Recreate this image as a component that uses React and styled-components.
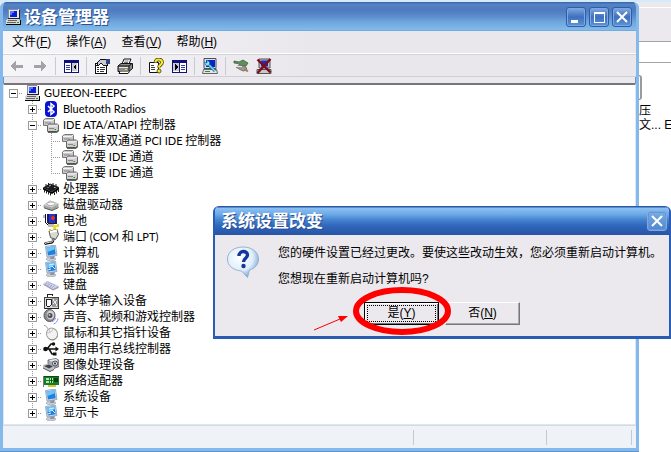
import React, { useState } from 'react'
import styled, { createGlobalStyle, css } from 'styled-components'

const GlobalStyle = createGlobalStyle`
  * { box-sizing: border-box; }
  body {
    margin: 0;
    background: #fff;
    font-family: "Liberation Sans", "Noto Sans CJK SC", sans-serif;
    font-size: 12px;
    line-height: 16px;
    color: #000;
  }
  button {
    font: inherit;
    color: inherit;
    padding: 0;
    border: none;
    background: none;
  }
  svg { display: block; }
`

const Desktop = styled.main`
  position: relative;
  min-height: 100vh;
  overflow: hidden;
`

/* explorer window behind everything */
const Explorer = styled.section`
  position: absolute;
  inset: 0;
  display: flex;
  flex-direction: column;
  background: #fff;
`
const ExplorerStrip = styled.div`
  height: 8px;
  background: linear-gradient(#d5ebfa 2px, #ebe9ed 2px);
  border-bottom: 1px solid #fff;
`
const ExplorerBar = styled.div`
  height: 34px;
  background: #ebe9ed;
  border-bottom: 1px solid #a5a4a8;
`
const ExplorerAddress = styled.div`
  height: 21px;
  border-bottom: 1px solid #a5a4a8;
`
const ExplorerFile = styled.div`
  display: flex;
  flex-direction: column;
  align-items: flex-end;
  padding-top: 12px;
`
const FileThumb = styled.div`
  width: 50px;
  height: 25px;
  margin: 0 29px 4px 0;
  border: 1px solid #8f8f94;
  border-right: 2px solid #9a9a9f;
  border-radius: 3px;
`
const FileName = styled.div`
  width: 44px;
  line-height: 14px;
  white-space: nowrap;
`

const Window = styled.section`
  position: relative;
  display: flex;
  flex-direction: column;
  min-height: calc(100vh - 3px);
  margin: 2px 32px 1px 0;
  border: solid #85b9ec;
  border-width: 0 3px 3px;
  border-radius: 6px 6px 0 0;
  background: #ebe9ed;
  box-shadow: inset 0 0 0 1px #5c9bd8, 0 1px 0 #5c93d0;
  overflow: hidden;
`
const TitleBar = styled.header`
  display: flex;
  align-items: center;
  gap: 3px;
  height: 29px;
  ${p => p.$active ? css`
    padding: 0 2px 0 6px;
    background: linear-gradient(#2a57a8 1px, #8cc0f2 2px, #6fabe8 8px, #4482cf 14px, #2f66bb 20px, #2856a8 28px);
  ` : css`
    margin: 0 -3px;
    padding: 0 7px 0 5px;
    background: linear-gradient(#3d6cae 1px, #5583c5 2px, #4e7bc0 8px, #5a8bcb 14px, #6ba2da 19px, #83bbe9 28px, #5b9bd8 29px);
  `}
`
const Title = styled.h1`
  flex: 1;
  margin: 0;
  padding-top: 3px;
  font-size: 17px;
  line-height: 24px;
  color: #fff;
  text-shadow: 1px 1px 0 #2b4f93;
`
const TitleButton = styled.button`
  display: flex;
  align-items: center;
  justify-content: center;
  width: 20px;
  height: 20px;
  border: 1px solid ${p => p.$pale ? '#7fa9dc' : '#2f5ea8'};
  border-radius: 3px;
  background: ${p => p.$pale
    ? 'linear-gradient(#7aade3, #4f86cf)'
    : 'linear-gradient(#82a8dd, #3f70bf 50%, #5d93d6)'};
  box-shadow: inset 0 0 0 1px ${p => p.$pale ? '#6297d8' : '#7ba8e0'};
`

const MenuBar = styled.nav`
  display: flex;
  gap: 15px;
  height: 23px;
  padding: 0 9px;
  align-items: center;
  background: linear-gradient(90deg, #f6f5f7, #e9e7ec 50%);
  border-bottom: 1px solid #fff;
`
const MenuItem = styled.button`
  white-space: nowrap;
`
const ToolBar = styled.div`
  display: flex;
  align-items: center;
  height: 23px;
  padding: 0 2px;
  background: linear-gradient(90deg, #f6f5f7, #e9e7ec 50%);
  border-top: 1px solid #d3d2d6;
  border-bottom: 1px solid #d0d0d4;
`
const ToolButton = styled.button`
  display: flex;
  align-items: center;
  justify-content: center;
  width: 23px;
  height: 22px;
`
const Divider = styled.span`
  width: 8px;
  height: 18px;
  background: linear-gradient(90deg, transparent 4px, #c6cdd0 4px, #c6cdd0 5px, transparent 5px);
`

const TreePane = styled.div`
  flex: 1;
  margin-top: 6px;
  padding-bottom: 3px;
  background: #fff;
  border: 1px solid #dce8f2;
  border-top: 2px solid #77777b;
`
const Tree = styled.ul`
  margin: 0;
  padding: 0;
  list-style: none;
`
const TreeRow = styled.li`
  display: flex;
  align-items: center;
  height: 16px;
`
/* one 19px column of the tree: dotted rail down, dotted arm to the right */
const Branch = styled.span`
  flex: none;
  display: flex;
  align-items: center;
  width: 19px;
  height: 16px;
  padding-left: 5px;
  background-image:
    ${p => p.$rail ? 'repeating-linear-gradient(#9a9a9a 0 1px, transparent 1px 2px)' : 'none'},
    ${p => p.$arm ? 'repeating-linear-gradient(90deg, #9a9a9a 0 1px, transparent 1px 2px)' : 'none'};
  background-repeat: no-repeat;
  background-size: 1px ${p => p.$last ? '8px' : '16px'}, 10px 1px;
  background-position: 9px 0, 9px 8px;
`
const Toggle = styled.button`
  width: 9px;
  height: 9px;
  border: 1px solid #9a9a9a;
  background:
    linear-gradient(#000, #000) center / 5px 1px no-repeat,
    ${p => p.$open ? '' : 'linear-gradient(#000, #000) center / 1px 5px no-repeat,'}
    #fff;
`
const TreeIcon = styled.span`
  flex: none;
  margin: 0 4px 0 1px;
`
const Label = styled.span`
  white-space: nowrap;
`
const Latin = styled.span`
  font-family: Lato, "Liberation Sans", sans-serif;
  font-size: 11px;
`

const StatusBar = styled.footer`
  display: flex;
  height: 23px;
  padding: 4px 4px 3px 0;
  background: #eff3f8;
  border-top: 1px solid #d5dbe3;
`
const StatusPane = styled.span`
  ${p => p.$width ? `width: ${p.$width}px;` : 'flex: 1;'}
  border-right: 1px solid #c3c9d0;
`

const Dialog = styled.section`
  position: absolute;
  top: 206px;
  left: 213px;
  right: 0;
  border: solid #2a5bb5;
  border-width: 0 2px 3px 2px;
  border-radius: 6px 6px 0 0;
  background: #ebe9ed;
  overflow: hidden;
`
const DialogBody = styled.div`
  display: grid;
  grid-template-columns: 32px 1fr;
  column-gap: 19px;
  padding: 10px 0 0 12px;
`
const BubbleSlot = styled.div`
  padding-top: 1px;
`
const Message = styled.p`
  margin: 0 0 10px;
  white-space: nowrap;
`
const DialogActions = styled.div`
  display: flex;
  justify-content: center;
  gap: 6px;
  padding: 5px 0 11px;
`
const PushButton = styled.button`
  width: 75px;
  height: 23px;
  padding: 2px;
  border: 1px solid;
  border-color: #fff #77777b #77777b #fff;
  box-shadow: inset -1px -1px 0 #aaa8ad;
  background: #ebe9ed;
  ${p => p.$primary && css`
    border-color: #000;
    box-shadow: inset 1px 1px 0 #fff, inset -1px -1px 0 #77777b;
  `}
`
const FocusRing = styled.span`
  display: block;
  height: 17px;
  border: 1px ${p => p.$on ? 'dotted #000' : 'solid transparent'};
  line-height: 15px;
`
const Marker = styled.svg`
  position: absolute;
  left: 312px;
  top: 285px;
  pointer-events: none;
`

/* icons */
const Svg = ({ children, smooth, size = 16 }) => (
  <svg width={size} height={size} viewBox={`0 0 ${size} ${size}`} fill="none"
    shapeRendering={smooth ? 'auto' : 'crispEdges'} aria-hidden="true">{children}</svg>
)

const ComputerIcon = () => (
  <Svg>
    <path d="M3 0h10l1 1v8H3z" fill="#e6e6ea" />
    <path d="M3 0h10v1H3zM3 1h1v8H3z" fill="#8c8c98" />
    <path d="M5 2h7v6H5z" fill="#0a1cd8" />
    <path d="M5 2h4v2H7v2H5z" fill="#4e7bff" />
    <path d="M14 1h1v9h-1zM3 9h11v1H3z" fill="#222" />
    <path d="M2 10h11l2 2v3H1v-3z" fill="#d7d7d7" />
    <path d="M1 15h15v1H1zM15 11h1v4h-1z" fill="#000" />
    <path d="M3 11h9v1H3zM2 13h9v1H2z" fill="#666" />
    <path d="M12 13h2v1h-2z" fill="#18a018" />
  </Svg>
)
const BluetoothIcon = () => (
  <Svg smooth>
    <rect x="2" y="0" width="12" height="16" rx="4" fill="#0714cf" />
    <path d="M5 5l6 6-3 2.500v-11L11 5l-6 6" stroke="#fff" strokeWidth="1.500" />
  </Svg>
)
const DriveIcon = () => (
  <Svg smooth>
    <path d="M.5 3l2-1.500h8.500l.5 1v4.500l-2 1.500h-9z" fill="#c9c9c9" stroke="#777" />
    <path d="M1 3.500h8.500L11 2" stroke="#f4f4f4" />
    <path d="M2 6h6" stroke="#8b8b8b" />
    <path d="M4.500 8.500l2-1.500h8l1 1v5l-2 1.500h-9z" fill="#cdcdcd" stroke="#666" />
    <path d="M5 9h8.500l1.500-1.500" stroke="#fafafa" />
    <path d="M6 11.500h5" stroke="#888" />
    <path d="M11.500 12.500h1.500" stroke="#1ba31b" />
    <path d="M5 15.200h9l2-1.700" stroke="#222" />
  </Svg>
)
const ChipIcon = () => (
  <Svg smooth>
    <path d="M0 6.500L7 2.500l9 3.500-7 5z" fill="#1b1b1b" />
    <path d="M0 6.500l9 4.500v2L0 8.500zM9 11l7-5v2.500L9 13z" fill="#000" />
    <path d="M1.500 9v2.500M3.500 10v2.500M5.500 11v2.500M7.500 12v2.500M11.500 11.500V14M13.500 10v2.500M15.500 8.500V11M3 3v2M5.500 2v2M10 2v2M13 3v2" stroke="#222" />
    <path d="M6 5l2-1M11 6.500h1.500M4.500 6.500h1" stroke="#bbb" />
  </Svg>
)
const DiskIcon = () => (
  <Svg smooth>
    <path d="M0.500 8L7 3.500l8.500 3v3.500L9 13.500l-8.500-3z" fill="#a7a7a7" />
    <path d="M0.500 8L7 3.500l8.500 3L9 10.500z" fill="#d2d2d2" />
    <ellipse cx="8" cy="6.800" rx="4" ry="1.800" fill="#f8f8f8" stroke="#999" strokeWidth=".7" />
    <path d="M1 10.800l8 2.700 6.500-3" stroke="#555" />
    <path d="M11 11.500l2-1" stroke="#53b94e" />
  </Svg>
)
const BatteryIcon = () => (
  <Svg>
    <path d="M4 1h10v9H4z" fill="#2633c4" />
    <path d="M4 1h2v9H4zM12 1h2v9h-2z" fill="#151c70" />
    <path d="M9 3h2v4H9zM8 4h4v2H8z" fill="#e32b2b" />
    <path d="M2 1v8l3 3h5l1 2" stroke="#111" />
    <path d="M0 2h2v3H0zM5 11h6v3H5z" fill="#bcbcbc" />
    <path d="M10 12h5v2h-2v2h-3zM14 11h2v3h-2z" fill="#e8dd26" />
    <path d="M5 10h9v1H5z" fill="#222" />
  </Svg>
)
const PortIcon = () => (
  <Svg smooth>
    <path d="M6 2l8-1.500 1.500 5-3 5-5-2z" fill="#d9d9cf" stroke="#555" />
    <path d="M7 3l7-1.500" stroke="#fff" strokeWidth="2" />
    <path d="M7 0v2M14 0v1" stroke="#dfc832" strokeWidth="2" />
    <path d="M10 9.500c1 6-4 3-8.500 5.500" stroke="#111" strokeWidth="2.500" />
    <path d="M10 9.500c1 5-4 3-8 5" stroke="#f1f1f1" />
  </Svg>
)
const MonitorIcon = ({ card }) => (
  <Svg smooth>
    <ellipse cx="8" cy="14" rx="5" ry="1.800" fill="#c9ccd2" stroke="#9fa3ac" strokeWidth=".6" />
    <path d="M8 10h4l-1 4H7z" fill="#8e96a5" />
    <path d="M2.500 1.500L12.500 0l1.500 10.500L4 12z" fill="#d2dbe6" stroke="#8b9ab0" strokeWidth=".8" />
    <path d="M3.500 2.500l8-1.200 1.200 8L5 10.500z" fill="#1f80e0" />
    <path d="M3.500 2.500l8-1.200.5 3-8 3z" fill="#6bc4fa" />
    {card && <path d="M6 4l5-1M6 7l3-2 3 3M5 9l3-1" stroke="#d9f1ff" />}
  </Svg>
)
const KeyboardIcon = () => (
  <Svg smooth>
    <path d="M0.500 6.500L4 4l11.500 5v2L10 13.500 0.500 8z" fill="#9a9dbb" />
    <path d="M0.500 6.500L4 4l11.500 5-5.500 3z" fill="#e1e3f3" />
    <path d="M3 5.800l9 4.500M2 6.800l8 4.200M4.500 5l9 4.200" stroke="#8286b5" strokeWidth=".9" strokeDasharray="1.200 .7" />
  </Svg>
)
const HidIcon = () => (
  <Svg>
    <path d="M1 4h14v11H1z" fill="#dedede" stroke="#444" />
    <path d="M9 5h6v9H9z" fill="#999" />
    <path d="M10 6l4 7M10 11l4-4" stroke="#eee" />
    <path d="M4 4V1h5v2" stroke="#222" />
    <path d="M3 6h5v6l-1 1H4l-1-1z" fill="#fff" stroke="#222" />
    <path d="M2 15h14v1H2z" fill="#222" />
  </Svg>
)
const SoundIcon = () => (
  <Svg smooth>
    <ellipse cx="6.500" cy="6.500" rx="5.500" ry="6" fill="#8c8c91" stroke="#55555a" />
    <ellipse cx="7.500" cy="6" rx="3.800" ry="4.500" fill="#d0d0d5" />
    <circle cx="7" cy="6.500" r="2.500" fill="#4c4c55" />
    <circle cx="6.500" cy="6" r="1" fill="#c4c4ce" />
    <path d="M9 12.500c2-.5 3-1.500 3.500-3.500M10.500 15c3-1 4-3 4.500-5.500" stroke="#8a8ee0" />
  </Svg>
)
const MouseIcon = () => (
  <Svg smooth>
    <path d="M1 0.500c3 0 2 2 4 3" stroke="#999" />
    <ellipse cx="9" cy="9" rx="5.500" ry="6" transform="rotate(-25 9 9)" fill="#f3f3f1" stroke="#a3a39d" />
    <path d="M4 8c3 0 5-1 6-4M7 7l-1-3" stroke="#b5b5b0" strokeWidth=".8" />
    <path d="M7 14.500c4 1 7-1 7.500-4" stroke="#8f8f88" />
  </Svg>
)
const UsbIcon = () => (
  <Svg smooth>
    <path d="M2 8h12M4 8l4-5h3M6 8l3 5h3" stroke="#111" strokeWidth="1.500" />
    <circle cx="2.500" cy="8" r="2.300" fill="#111" />
    <path d="M12.500 5.500L16 8l-3.500 2.500z" fill="#111" />
    <circle cx="10.500" cy="3" r="1.700" fill="#111" />
    <path d="M10 11.500h3.500v3H10z" fill="#111" />
  </Svg>
)
const CameraIcon = () => (
  <Svg smooth>
    <path d="M5 3l8-1.500 3 2v6l-5 2-6-2z" fill="#a6a8ae" stroke="#5c5e66" strokeWidth=".8" />
    <path d="M6 3l7-1 2 1.500-7 1z" fill="#ececef" />
    <circle cx="12" cy="6.500" r="2.500" fill="#d9e2ee" stroke="#333" strokeWidth=".8" />
    <circle cx="12" cy="6.500" r="1" fill="#222" />
    <path d="M0 8l5-1.500 6 3v3L7 14.500 0 11z" fill="#bfc1c7" />
    <path d="M1 9l5-1.500 4 2-4 2z" fill="#3f4248" />
    <path d="M0 11l7 3.500 4-2" stroke="#555" />
  </Svg>
)
const NetworkIcon = () => (
  <Svg>
    <path d="M0 3h1v11H0z" fill="#777" />
    <path d="M1 3h15v9H1z" fill="#137c25" />
    <path d="M3 5h3v2H3zM7 5h3v2H7zM3 8h3v2H3zM7 8h3v2H7z" fill="#b9e5b2" />
    <path d="M11 5h4v4h-4z" fill="#0a3f13" />
    <path d="M5 12h8v2H5z" fill="#d4c23b" />
    <path d="M1 3h15v1H1zM8 5h1v5H8z" fill="#0a4c14" />
  </Svg>
)

const ArrowIcon = ({ right }) => (
  <Svg>
    <path d={right ? 'M2 7h7V3l6 5-6 5V10H2z' : 'M14 7H7V3L1 8l6 5V10h7z'} fill="#a3a3a6" />
  </Svg>
)
const PaneIcon = ({ right }) => (
  <Svg>
    <path d="M1 2h14v12H1z" fill="#fff" stroke="#10107a" />
    <path d="M1 2h14v3H1z" fill="#10107a" />
    <path d={right ? 'M2 5h6v8H2z' : 'M8 5h6v8H8z'} fill="#c9c9cf" />
    <path d="M8 5h1v9H8z" fill="#10107a" />
    <path d={right ? 'M4 6l3 3-3 3z' : 'M13 6l-3 3 3 3z'} fill="#000" />
    <path d={right ? 'M10 7h4M10 9h4M10 11h4' : 'M3 7h4M3 9h4M3 11h4'} stroke="#333a9a" />
  </Svg>
)
const PropertiesIcon = () => (
  <Svg>
    <path d="M1 5h11v10H1z" fill="#fff" stroke="#111" />
    <path d="M3 9h2M6 9h5M3 11h2M6 11h5M3 13h2M6 13h4" stroke="#333" />
    <path d="M4 4l3-3h6v6H9L7 5 5 7H3z" fill="#c7cbd3" stroke="#111" />
    <path d="M12 1h4v5h-4z" fill="#32457e" />
  </Svg>
)
const PrinterIcon = () => (
  <Svg smooth>
    <path d="M5 6l2-5h7l-2 5z" fill="#fff" stroke="#111" />
    <path d="M7.500 3h4M7 4.500h4" stroke="#555" strokeWidth=".8" />
    <path d="M1 8l3-2.500h11.500v5L12 13.500H1z" fill="#8b8b8b" stroke="#111" />
    <path d="M1 8h11l3-2.500M12 8v5" stroke="#111" />
    <path d="M2 9.500h9" stroke="#e8e8e8" />
    <path d="M8 11.500h2" stroke="#efe32e" />
    <path d="M3 13.500l-1 2h9l1.500-2" fill="#fff" stroke="#111" />
  </Svg>
)
const HelpIcon = () => (
  <Svg smooth>
    <path d="M1.500 4.500h9v10h-9z" fill="#fff" stroke="#111" />
    <path d="M3 7.500h3M3 9.500h4M3 11.500h4" stroke="#444" />
    <path d="M7.500 4.500c0-4 6.500-4 6.500 0 0 2.500-3 2-3 5" stroke="#3a3700" strokeWidth="3.600" />
    <path d="M7.500 4.500c0-4 6.500-4 6.500 0 0 2.500-3 2-3 5" stroke="#f5e72c" strokeWidth="2.200" />
    <circle cx="11" cy="13" r="2" fill="#f5e72c" stroke="#3a3700" strokeWidth=".8" />
  </Svg>
)
const ScanIcon = () => (
  <Svg smooth>
    <path d="M2 .5h12v10H2z" fill="#d9e0ea" stroke="#4c5160" />
    <path d="M4 2h9v7H4z" fill="#0a23c4" />
    <path d="M1.500 11.500h13l1 4H.5z" fill="#e5e5e5" stroke="#666" />
    <path d="M3 13.500h5" stroke="#1a9a2a" />
    <path d="M6 6l7 7" stroke="#1b5f9e" strokeWidth="3" />
    <path d="M6 6l7 7" stroke="#6fe0f5" strokeWidth="1.500" />
    <path d="M2 4l3 1 0-3 2.500 2v3L4.500 8z" fill="#8deaf7" stroke="#2476a8" strokeWidth=".8" />
  </Svg>
)
const PlugIcon = () => (
  <Svg smooth>
    <path d="M1 3l5 1 4-2 5 3-2 3-6-.5L5 5.500 1 5z" fill="#5f8f5d" stroke="#3f5f40" strokeWidth=".8" />
    <path d="M3 9l4-2 6 2 1 3-4 1-4-2z" fill="#9b9b94" stroke="#65655f" strokeWidth=".8" />
    <path d="M3 8.500h6" stroke="#e8e8e2" />
    <path d="M11 11l4 2.500" stroke="#a5825a" strokeWidth="2" />
  </Svg>
)
const UninstallIcon = () => (
  <Svg smooth>
    <path d="M3 1h11v9H3z" fill="#bcbccb" stroke="#555" />
    <path d="M5 2.500h7v6H5z" fill="#1d2fc0" />
    <path d="M1 11.500h14v4H1z" fill="#c9c9c9" stroke="#555" />
    <path d="M1.500 1.500l13 13M14.500 1l-13 14" stroke="#7d0b1d" strokeWidth="2.400" />
  </Svg>
)
const BubbleIcon = () => (
  <Svg smooth size={32}>
    <defs>
      <radialGradient id="bubble" cx=".4" cy=".35" r=".7">
        <stop offset="0" stopColor="#fff" />
        <stop offset=".6" stopColor="#e0eefa" />
        <stop offset="1" stopColor="#6d9bcc" />
      </radialGradient>
    </defs>
    <path d="M16 1c9 0 15.500 5 15.500 12 0 5.500-3.500 9.500-9 11l-2 7.500-6-6.500C6 24 .5 20 .5 13 .5 6 7 1 16 1z"
      fill="url(#bubble)" stroke="#98b2cd" />
    <path d="M12 10c0-6 8.500-5.500 8.500-1 0 3.500-4 3-4 7" stroke="#12379a" strokeWidth="3.400" />
    <circle cx="16.500" cy="20" r="2.200" fill="#12379a" />
  </Svg>
)
const CloseGlyph = () => (
  <Svg smooth><path d="M3 3l10 10M13 3L3 13" stroke="#fff" strokeWidth="2" /></Svg>
)

const menus = [['文件', 'F'], ['操作', 'A'], ['查看', 'V'], ['帮助', 'H']]

const tools = [
  ['后退', <ArrowIcon />], ['前进', <ArrowIcon right />], null,
  ['控制台树', <PaneIcon />], null,
  ['属性', <PropertiesIcon />], ['打印', <PrinterIcon />], null,
  ['帮助', <HelpIcon />], ['操作窗格', <PaneIcon right />], null,
  ['扫描', <ScanIcon />], null,
  ['停用', <PlugIcon />], ['卸载', <UninstallIcon />],
]

const devices = [
  { label: 'Bluetooth Radios', icon: <BluetoothIcon /> },
  {
    label: 'IDE ATA/ATAPI 控制器',
    icon: <DriveIcon />,
    children: ['标准双通道 PCI IDE 控制器', '次要 IDE 通道', '主要 IDE 通道'],
  },
  { label: '处理器', icon: <ChipIcon /> },
  { label: '磁盘驱动器', icon: <DiskIcon /> },
  { label: '电池', icon: <BatteryIcon /> },
  { label: '端口 (COM 和 LPT)', icon: <PortIcon /> },
  { label: '计算机', icon: <MonitorIcon /> },
  { label: '监视器', icon: <MonitorIcon card /> },
  { label: '键盘', icon: <KeyboardIcon /> },
  { label: '人体学输入设备', icon: <HidIcon /> },
  { label: '声音、视频和游戏控制器', icon: <SoundIcon /> },
  { label: '鼠标和其它指针设备', icon: <MouseIcon /> },
  { label: '通用串行总线控制器', icon: <UsbIcon /> },
  { label: '图像处理设备', icon: <CameraIcon /> },
  { label: '网络适配器', icon: <NetworkIcon /> },
  { label: '系统设备', icon: <MonitorIcon /> },
  { label: '显示卡', icon: <MonitorIcon card /> },
]

// latin runs are set one size smaller than the chinese
const Mixed = ({ text }) => text.split(/([ -~]+)/).map((part, i) =>
  i % 2 ? <Latin key={i}>{part}</Latin> : part
)

const Accel = ({ text, letter }) => <>{text}(<u>{letter}</u>)</>

const DeviceTree = () => {
  const [rootOpen, setRootOpen] = useState(true)
  const [open, setOpen] = useState({ 'IDE ATA/ATAPI 控制器': true })

  return (
    <Tree>
      <TreeRow>
        <Branch $arm>
          <Toggle aria-label="GUEEON-EEEPC" $open={rootOpen} onClick={() => setRootOpen(!rootOpen)} />
        </Branch>
        <TreeIcon><ComputerIcon /></TreeIcon>
        <Label><Mixed text="GUEEON-EEEPC" /></Label>
      </TreeRow>
      {rootOpen && devices.map(({ label, icon, children = [] }, i) => (
        <React.Fragment key={label}>
          <TreeRow>
            <Branch />
            <Branch $rail $arm $last={i === devices.length - 1}>
              <Toggle
                aria-label={label}
                $open={open[label]}
                onClick={() => setOpen({ ...open, [label]: !open[label] })}
              />
            </Branch>
            <TreeIcon>{icon}</TreeIcon>
            <Label><Mixed text={label} /></Label>
          </TreeRow>
          {open[label] && children.map((child, j) => (
            <TreeRow key={child}>
              <Branch />
              <Branch $rail />
              <Branch $rail $arm $last={j === children.length - 1} />
              <TreeIcon><DriveIcon /></TreeIcon>
              <Label><Mixed text={child} /></Label>
            </TreeRow>
          ))}
        </React.Fragment>
      ))}
    </Tree>
  )
}

const App = () => (
  <>
    <GlobalStyle />
    <Desktop>
      <Explorer>
        <ExplorerStrip />
        <ExplorerBar />
        <ExplorerAddress />
        <ExplorerFile>
          <FileThumb />
          <FileName>一压</FileName>
          <FileName>件文... E</FileName>
        </ExplorerFile>
      </Explorer>

      <Window>
        <TitleBar>
          <ComputerIcon />
          <Title>设备管理器</Title>
          <TitleButton aria-label="最小化">
            <Svg><path d="M3 11h7v3H3z" fill="#fff" /></Svg>
          </TitleButton>
          <TitleButton aria-label="最大化">
            <Svg><path d="M3 3h11v11H3zM4 5v8h9V5z" fill="#fff" fillRule="evenodd" /></Svg>
          </TitleButton>
          <TitleButton aria-label="关闭"><CloseGlyph /></TitleButton>
        </TitleBar>
        <MenuBar>
          {menus.map(([text, letter]) => (
            <MenuItem key={letter}><Accel text={text} letter={letter} /></MenuItem>
          ))}
        </MenuBar>
        <ToolBar>
          {tools.map((tool, i) => tool
            ? <ToolButton key={i} aria-label={tool[0]}>{tool[1]}</ToolButton>
            : <Divider key={i} />
          )}
        </ToolBar>
        <TreePane>
          <DeviceTree />
        </TreePane>
        <StatusBar>
          <StatusPane />
          <StatusPane $width={133} />
          <StatusPane $width={85} />
        </StatusBar>
      </Window>

      <Dialog role="dialog" aria-label="系统设置改变">
        <TitleBar $active>
          <Title as="h2">系统设置改变</Title>
          <TitleButton $pale aria-label="关闭"><CloseGlyph /></TitleButton>
        </TitleBar>
        <DialogBody>
          <BubbleSlot><BubbleIcon /></BubbleSlot>
          <div>
            <Message>您的硬件设置已经过更改。要使这些改动生效，您必须重新启动计算机。</Message>
            <Message>您想现在重新启动计算机吗?</Message>
          </div>
        </DialogBody>
        <DialogActions>
          <PushButton $primary><FocusRing $on><Accel text="是" letter="Y" /></FocusRing></PushButton>
          <PushButton><FocusRing><Accel text="否" letter="N" /></FocusRing></PushButton>
        </DialogActions>
      </Dialog>

      {/* red pen marks round the yes button */}
      <Marker width="142" height="54" viewBox="0 0 142 54" fill="none" aria-hidden="true">
        <ellipse cx="90" cy="26" rx="46" ry="21" stroke="#f00" strokeWidth="6" />
        <path d="M2 45l26-11" stroke="#f00" />
        <path d="M36 31l-10 0 3 6z" fill="#f00" />
      </Marker>
    </Desktop>
  </>
)

export default App
